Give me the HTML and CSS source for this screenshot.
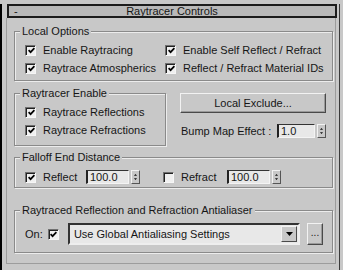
FILE: index.html
```html
<!DOCTYPE html>
<html lang="en">
<head>
    <meta charset="UTF-8">
    <title>Raytracer Controls</title>
    <link rel="stylesheet" href="styles.css">
</head>
<body>
    <div class="frame">
        <!-- Rollout header -->
        <div class="title">
            <span class="title-toggle">-</span>
            <span class="title-text">Raytracer Controls</span>
            <span></span>
        </div>

        <div class="panel">
            <!-- Local Options -->
            <div class="group group-local">
                <span class="group-title">Local Options</span>
                <div class="rows grid-2">
                    <label class="check"><span class="box"><svg viewBox="0 0 7 7"><path d="M0.6 3.2 L2.6 5.2 L6.4 1.2"/></svg></span>Enable Raytracing</label>
                    <label class="check"><span class="box"><svg viewBox="0 0 7 7"><path d="M0.6 3.2 L2.6 5.2 L6.4 1.2"/></svg></span>Enable Self Reflect / Refract</label>
                    <label class="check"><span class="box"><svg viewBox="0 0 7 7"><path d="M0.6 3.2 L2.6 5.2 L6.4 1.2"/></svg></span>Raytrace Atmospherics</label>
                    <label class="check"><span class="box"><svg viewBox="0 0 7 7"><path d="M0.6 3.2 L2.6 5.2 L6.4 1.2"/></svg></span>Reflect / Refract Material IDs</label>
                </div>
            </div>

            <!-- Raytracer Enable + exclude/bump -->
            <div class="middle">
                <div class="group group-enable">
                    <span class="group-title">Raytracer Enable</span>
                    <div class="rows">
                        <label class="check"><span class="box"><svg viewBox="0 0 7 7"><path d="M0.6 3.2 L2.6 5.2 L6.4 1.2"/></svg></span>Raytrace Reflections</label>
                        <label class="check"><span class="box"><svg viewBox="0 0 7 7"><path d="M0.6 3.2 L2.6 5.2 L6.4 1.2"/></svg></span>Raytrace Refractions</label>
                    </div>
                </div>
                <div class="side">
                    <div class="button exclude-btn">Local Exclude...</div>
                    <div class="bump-row">
                        <span class="bump-label">Bump Map Effect :</span>
                        <div class="spinner spinner-bump">
                            <span class="field">1.0</span>
                            <span class="arrows"><svg viewBox="0 0 9 14"><path d="M2.5 5.5 L4.5 3 L6.5 5.5 Z M2.5 8.5 L4.5 11 L6.5 8.5 Z"/></svg></span>
                        </div>
                    </div>
                </div>
            </div>

            <!-- Falloff End Distance -->
            <div class="group group-falloff">
                <span class="group-title">Falloff End Distance</span>
                <div class="rows falloff-row">
                    <label class="check check-reflect"><span class="box"><svg viewBox="0 0 7 7"><path d="M0.6 3.2 L2.6 5.2 L6.4 1.2"/></svg></span>Reflect</label>
                    <div class="spinner">
                        <span class="field">100.0</span>
                        <span class="arrows"><svg viewBox="0 0 9 14"><path d="M2.5 5.5 L4.5 3 L6.5 5.5 Z M2.5 8.5 L4.5 11 L6.5 8.5 Z"/></svg></span>
                    </div>
                    <label class="check check-refract"><span class="box"></span>Refract</label>
                    <div class="spinner">
                        <span class="field">100.0</span>
                        <span class="arrows"><svg viewBox="0 0 9 14"><path d="M2.5 5.5 L4.5 3 L6.5 5.5 Z M2.5 8.5 L4.5 11 L6.5 8.5 Z"/></svg></span>
                    </div>
                </div>
            </div>

            <!-- Antialiaser -->
            <div class="group group-aa">
                <span class="group-title">Raytraced Reflection and Refraction Antialiaser</span>
                <div class="rows aa-row">
                    <span class="on-label">On:</span>
                    <span class="box"><svg viewBox="0 0 7 7"><path d="M0.6 3.2 L2.6 5.2 L6.4 1.2"/></svg></span>
                    <div class="select">
                        <span class="select-text">Use Global Antialiasing Settings</span>
                        <span class="select-arrow"><svg viewBox="0 0 7 4"><path d="M0 0 L7 0 L3.5 4 Z"/></svg></span>
                    </div>
                    <div class="button dots-btn">...</div>
                </div>
            </div>
        </div>
    </div>
</body>
</html>
```

FILE: styles.css
```css
* {
    box-sizing: border-box;
}

body {
    margin: 0;
    width: 343px;
    height: 270px;
    overflow: hidden;
    background-color: #c8c8c8;
    color: #161616;
    font-family: "Liberation Sans", Arial, sans-serif;
    font-size: 11px;
    line-height: 13px;
}

.frame {
    width: 340px;
    height: 268px;
    border-left: 2px solid #000;
    border-right: 1px solid #3a3a3a;
    border-bottom: 2px solid #111;
}

/* Rollout header */
.title {
    margin: 4px 0 0 5px;
    width: 330px;
    height: 14px;
    border: 2px solid #1c1c1c;
    background-color: #b9b9b9;
    display: grid;
    grid-template-columns: 1fr auto 1fr;
    align-items: center;
    line-height: 10px;
}

.title-toggle {
    padding-left: 5px;
}

.panel {
    margin-left: 4px;
    width: 330px;
    height: 246px;
    border: 1px solid #9c9c9c;
    border-top: none;
    padding-top: 13px;
}

/* Group boxes */
.group {
    border: 1px solid #8a8a8a;
    box-shadow: 1px 1px 0 #ececec, inset 1px 1px 0 #ececec;
    padding: 0 9px 3px 10px;
}

.group-title {
    display: block;
    width: fit-content;
    margin: -7px 0 0 -5px;
    padding: 0 2px;
    background-color: #c8c8c8;
    line-height: 13px;
}

.group-local,
.group-falloff,
.group-aa {
    margin-left: 7px;
    width: 319px;
}

.rows {
    margin-top: 3px;
}

.grid-2 {
    display: grid;
    grid-template-columns: 140px 1fr;
}

.check {
    display: flex;
    align-items: center;
    height: 18px;
    white-space: nowrap;
}

.box {
    width: 11px;
    height: 11px;
    flex: none;
    margin-right: 7px;
    background-color: #f0f0f0;
    border: 1px solid;
    border-color: #707070 #f6f6f6 #f6f6f6 #707070;
    box-shadow: inset 1px 1px 0 #222;
    display: flex;
    align-items: center;
    justify-content: center;
}

.box svg {
    width: 7px;
    height: 7px;
    margin: 1px 0 0 1px;
}

.box path {
    fill: none;
    stroke: #000;
    stroke-width: 1.7;
}

/* Middle section */
.middle {
    display: flex;
    margin-top: 12px;
    margin-left: 7px;
}

.group-enable {
    width: 152px;
    padding-bottom: 6px;
}

.side {
    margin-left: 14px;
    width: 146px;
}

.button {
    background-color: #c8c8c8;
    border: 1px solid;
    border-color: #f2f2f2 #4a4a4a #4a4a4a #f2f2f2;
    box-shadow: inset -1px -1px 0 #9a9a9a;
    display: flex;
    align-items: center;
    justify-content: center;
}

.exclude-btn {
    height: 20px;
}

.bump-row {
    display: flex;
    align-items: center;
    margin-top: 10px;
    height: 16px;
}

.bump-label {
    width: 98px;
    padding-left: 1px;
}

/* Spinners */
.spinner {
    display: flex;
    align-items: center;
    gap: 2px;
}

.field {
    width: 43px;
    height: 14px;
    padding-left: 2px;
    background-color: #e8e8e8;
    border-left: 2px solid #222;
    border-top: 1px solid #333;
    border-right: 1px solid #f4f4f4;
    border-bottom: 1px solid #f4f4f4;
    line-height: 12px;
}

.spinner-bump .field {
    width: 38px;
}

.arrows {
    width: 9px;
    height: 14px;
    background-color: #c8c8c8;
    border: 1px solid;
    border-color: #f2f2f2 #555 #555 #f2f2f2;
}

.arrows svg {
    display: block;
    width: 7px;
    height: 12px;
}

.arrows path {
    fill: #111;
}

/* Falloff */
.group-falloff {
    margin-top: 11px;
    padding-bottom: 1px;
}

.falloff-row {
    display: flex;
    align-items: center;
    margin-top: 4px;
    height: 18px;
}

.check-reflect {
    width: 61px;
}

.check-refract {
    width: 64px;
    margin-left: 23px;
}

/* Antialiaser */
.group-aa {
    margin-top: 22px;
    padding-bottom: 7px;
}

.aa-row {
    display: flex;
    align-items: center;
    margin-top: 6px;
    height: 22px;
}

.on-label {
    width: 23px;
}

.aa-row .box {
    margin-right: 9px;
}

.select {
    width: 233px;
    height: 22px;
    display: flex;
    align-items: center;
    padding: 1px;
    background-color: #e8e8e8;
    border: 2px solid;
    border-color: #333 #eeeeee #eeeeee #333;
}

.select-text {
    flex: 1;
    padding-left: 3px;
    white-space: nowrap;
}

.select-arrow {
    width: 16px;
    height: 16px;
    background-color: #c8c8c8;
    border: 1px solid;
    border-color: #f2f2f2 #4a4a4a #4a4a4a #f2f2f2;
    display: flex;
    align-items: center;
    justify-content: center;
}

.select-arrow svg {
    width: 7px;
    height: 4px;
}

.select-arrow path {
    fill: #000;
}

.dots-btn {
    margin-left: 7px;
    width: 16px;
    height: 22px;
    padding-bottom: 3px;
    font-size: 10px;
}
```
